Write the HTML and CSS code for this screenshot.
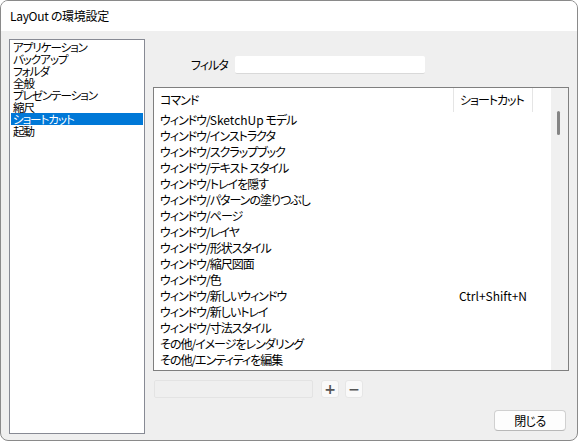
FILE: index.html
```html
<!DOCTYPE html>
<html lang="ja">
<head>
<meta charset="utf-8">
<link rel="stylesheet" href="styles.css">
</head>
<body>
<div class="window">
  <div class="titlebar">LayOut の環境設定</div>
  <div class="main">
    <div class="nav">
      <div class="nav-item">アプリケーション</div>
      <div class="nav-item">バックアップ</div>
      <div class="nav-item">フォルダ</div>
      <div class="nav-item">全般</div>
      <div class="nav-item">プレゼンテーション</div>
      <div class="nav-item">縮尺</div>
      <div class="nav-item selected">ショートカット</div>
      <div class="nav-item">起動</div>
    </div>
    <div class="panel">
      <div class="filter-row">
        <span class="filter-label">フィルタ</span>
        <div class="filter-input"></div>
      </div>
      <div class="table">
        <div class="table-body">
          <div class="row header">
            <div class="c-cmd">コマンド</div>
            <div class="c-key">ショートカット</div>
            <div class="c-pad"></div>
          </div>
          <div class="row"><div class="c-cmd">ウィンドウ/<span class="latin">SketchUp</span> モデル</div><div class="c-key"></div></div>
          <div class="row"><div class="c-cmd">ウィンドウ/インストラクタ</div><div class="c-key"></div></div>
          <div class="row"><div class="c-cmd">ウィンドウ/スクラップブック</div><div class="c-key"></div></div>
          <div class="row"><div class="c-cmd">ウィンドウ/テキスト スタイル</div><div class="c-key"></div></div>
          <div class="row"><div class="c-cmd">ウィンドウ/トレイを隠す</div><div class="c-key"></div></div>
          <div class="row"><div class="c-cmd">ウィンドウ/パターンの塗りつぶし</div><div class="c-key"></div></div>
          <div class="row"><div class="c-cmd">ウィンドウ/ページ</div><div class="c-key"></div></div>
          <div class="row"><div class="c-cmd">ウィンドウ/レイヤ</div><div class="c-key"></div></div>
          <div class="row"><div class="c-cmd">ウィンドウ/形状スタイル</div><div class="c-key"></div></div>
          <div class="row"><div class="c-cmd">ウィンドウ/縮尺図面</div><div class="c-key"></div></div>
          <div class="row"><div class="c-cmd">ウィンドウ/色</div><div class="c-key"></div></div>
          <div class="row"><div class="c-cmd">ウィンドウ/新しいウィンドウ</div><div class="c-key latin">Ctrl+Shift+N</div></div>
          <div class="row"><div class="c-cmd">ウィンドウ/新しいトレイ</div><div class="c-key"></div></div>
          <div class="row"><div class="c-cmd">ウィンドウ/寸法スタイル</div><div class="c-key"></div></div>
          <div class="row"><div class="c-cmd">その他/イメージをレンダリング</div><div class="c-key"></div></div>
          <div class="row"><div class="c-cmd">その他/エンティティを編集</div><div class="c-key"></div></div>
        </div>
        <div class="scrollbar"><div class="thumb"></div></div>
      </div>
      <div class="edit-row">
        <div class="key-input"></div>
        <button class="small-btn">+</button>
        <button class="small-btn minus">−</button>
      </div>
      <div class="close-row">
        <button class="close-btn">閉じる</button>
      </div>
    </div>
  </div>
</div>
</body>
</html>
```
FILE: styles.css
```css
html, body {
  margin: 0;
  padding: 0;
  background: #ffffff;
}
body {
  font-family: "Noto Sans CJK JP", "Liberation Sans", sans-serif;
  font-size: 12px;
  font-feature-settings: "palt" 1;
  color: #000;
}
.window {
  width: 576px;
  height: 439px;
  border: 1px solid #8a8a8a;
  border-radius: 8px;
  overflow: hidden;
  background: #efefef;
  display: flex;
  flex-direction: column;
}
.titlebar {
  height: 30px;
  background: #ffffff;
  line-height: 30px;
  padding-left: 9px;
  font-size: 12px;
  letter-spacing: -0.3px;
  flex: none;
}
.main {
  display: flex;
  padding: 8px 0 0 8px;
  gap: 8px;
}
.nav {
  width: 134px;
  height: 392px;
  border: 1px solid #878a94;
  background: #ffffff;
  padding-top: 1px;
  box-sizing: content-box;
}
.nav-item {
  height: 12px;
  line-height: 12px;
  font-size: 11.5px;
  letter-spacing: -1px;
  padding-left: 2px;
  margin-left: 1px;
  margin-right: 1px;
  white-space: nowrap;
}
.nav-item.selected {
  background: #0078d7;
  color: #ffffff;
}
.panel {
  width: 416px;
  display: flex;
  flex-direction: column;
}
.filter-row {
  margin-top: 17px;
  height: 18px;
  display: flex;
  align-items: center;
  padding-left: 38px;
}
.filter-label {
  width: 44px;
  line-height: 18px;
  white-space: nowrap;
  letter-spacing: -1px;
}
.filter-input {
  width: 190px;
  height: 17px;
  background: #ffffff;
  border-bottom: 1px solid #d9d9d9;
  border-radius: 2px;
}
.table {
  margin-top: 13px;
  height: 282px;
  border: 1px solid #7f7f7f;
  background: #ffffff;
  display: flex;
  overflow: hidden;
}
.table-body {
  flex: 1;
  display: flex;
  flex-direction: column;
}
.row {
  display: flex;
  height: 16px;
  line-height: 16px;
  flex: none;
  white-space: nowrap;
  letter-spacing: -1px;
}
.latin {
  letter-spacing: 0;
}
.row.header {
  height: 24px;
  line-height: 24px;
}
.c-cmd {
  width: 293px;
  padding-left: 6px;
}
.c-key {
  width: 73px;
  padding-left: 6px;
}
.header .c-cmd,
.header .c-key {
  border-right: 1px solid #e5e5e5;
}
.header .c-key {
  width: 72px;
}
.c-pad {
  flex: 1;
}
.scrollbar {
  width: 17px;
  background: #f0f0f0;
  flex: none;
  padding-top: 23px;
}
.thumb {
  width: 3px;
  height: 24px;
  margin-left: 6px;
  background: #858585;
  border-radius: 2px;
}
.edit-row {
  margin-top: 9px;
  display: flex;
  align-items: center;
  height: 18px;
}
.key-input {
  width: 157px;
  height: 16px;
  margin-left: 1px;
  background: #efefef;
  border: 1px solid #e3e3e3;
  border-radius: 2px;
}
.small-btn {
  width: 18px;
  height: 18px;
  margin-left: 8px;
  padding: 0;
  border: 1px solid #e6e6e6;
  border-radius: 3px;
  background: #f9f9f9;
  color: #555;
  font-family: "DejaVu Sans", sans-serif;
  font-size: 14px;
  font-weight: bold;
  line-height: 16px;
}
.small-btn.minus {
  margin-left: 6px;
}
.close-row {
  margin-top: 12px;
  display: flex;
  justify-content: flex-end;
  padding-right: 3px;
}
.close-btn {
  width: 72px;
  height: 21px;
  padding: 0;
  background: #fdfdfd;
  border: 1px solid #d0d0d0;
  border-bottom-color: #b8b8b8;
  border-radius: 4px;
  font-family: "Noto Sans CJK JP", sans-serif;
  font-feature-settings: "palt" 1;
  font-size: 12px;
  letter-spacing: -0.5px;
  color: #000;
}
```
